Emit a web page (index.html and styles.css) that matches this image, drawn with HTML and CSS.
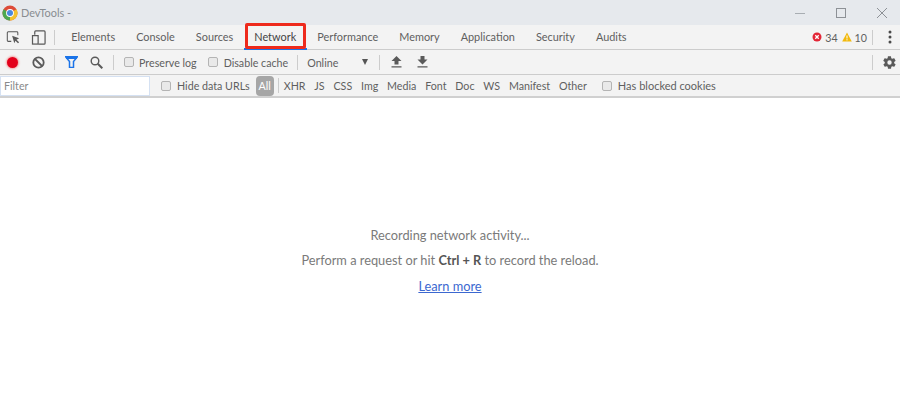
FILE: index.html
```html
<!DOCTYPE html>
<html lang="en">
<head>
<meta charset="utf-8">
<title>DevTools</title>
<link rel="stylesheet" href="styles.css">
</head>
<body>
<header class="titlebar">
  <svg class="chrome" width="16" height="16" viewBox="0 0 16 16">
    <circle cx="8" cy="8" r="7.5" fill="#dd4b39"/>
    <path d="M8 8 8 15.500A7.500 7.500 0 0 1 1.500 4.250Z" fill="#4ca84f"/>
    <path d="M8 8 14.500 4.250A7.500 7.500 0 0 1 8 15.500Z" fill="#f3c22e"/>
    <circle cx="8" cy="8" r="3.900" fill="#fff"/>
    <circle cx="8" cy="8" r="3" fill="#4a89dc"/>
  </svg>
  <span class="title">DevTools -</span>
  <div class="winbtns">
    <svg width="12" height="12" viewBox="0 0 12 12"><path d="M1 6.500H11" stroke="#a8adb2" fill="none"/></svg>
    <svg width="12" height="12" viewBox="0 0 12 12"><rect x="1.500" y="1.500" width="9" height="9" stroke="#8d9196" fill="none"/></svg>
    <svg width="12" height="12" viewBox="0 0 12 12"><path d="M1 1 11 11M11 1 1 11" stroke="#8d9196" fill="none"/></svg>
  </div>
</header>

<nav class="tabbar">
  <svg class="ic-inspect" width="14" height="14" viewBox="0 0 16 16"><path d="M6 13H2.500a1 1 0 0 1-1-1V3a1 1 0 0 1 1-1h10a1 1 0 0 1 1 1v3" fill="none" stroke="#5a5a5a" stroke-width="1.200"/><path d="M7 6.500 15 9.500 12 11 15 14 13.700 15.200 10.800 12.200 9.500 15Z" fill="#5a5a5a"/></svg>
  <svg class="ic-device" width="15" height="15" viewBox="0 0 16 16"><path d="M4 5V2a1 1 0 0 1 1-1h9a1 1 0 0 1 1 1v12a1 1 0 0 1-1 1H8" fill="none" stroke="#5a5a5a" stroke-width="1.300"/><rect x="1.600" y="6" width="6" height="9" fill="none" stroke="#5a5a5a" stroke-width="1.300"/></svg>
  <span class="vsep tabsep"></span>
  <div class="tabs">
    <span class="tab">Elements</span>
    <span class="tab">Console</span>
    <span class="tab">Sources</span>
    <span class="tab active">Network</span>
    <span class="tab">Performance</span>
    <span class="tab">Memory</span>
    <span class="tab">Application</span>
    <span class="tab">Security</span>
    <span class="tab">Audits</span>
  </div>
  <div class="status">
    <svg width="10" height="10" viewBox="0 0 10 10"><circle cx="5" cy="5" r="4.500" fill="#e32636"/><path d="M3.300 3.300 6.700 6.700M6.700 3.300 3.300 6.700" stroke="#fff" stroke-width="1.300"/></svg>
    <span class="count">34</span>
    <svg class="warn" width="10" height="10" viewBox="0 0 10 10"><path d="M5 .5 9.800 9.500H.2Z" fill="#f2b90d"/><path d="M5 3.500V6.500M5 7.200V8.400" stroke="#fff" stroke-width="1"/></svg>
    <span class="count">10</span>
    <span class="vsep statsep"></span>
    <svg class="kebab" width="4" height="14" viewBox="0 0 4 14"><circle cx="2" cy="2" r="1.500" fill="#4a4a4a"/><circle cx="2" cy="7" r="1.500" fill="#4a4a4a"/><circle cx="2" cy="12" r="1.500" fill="#4a4a4a"/></svg>
  </div>
</nav>

<section class="toolbar">
  <span class="record"></span>
  <svg class="ic-clear" width="13" height="13" viewBox="0 0 13 13"><circle cx="6.500" cy="6.500" r="5.200" fill="none" stroke="#5a5a5a" stroke-width="1.800"/><path d="M3 3 10 10" stroke="#5a5a5a" stroke-width="1.800"/></svg>
  <span class="vsep sep-a"></span>
  <svg class="ic-filter" width="13" height="12" viewBox="0 0 13 12"><path d="M.5.800H12.500L8.500 5.500V11.500H4.500V5.500Z" fill="none" stroke="#1a73e8" stroke-width="1.500"/><path d="M1 1H12V3H1Z" fill="#1a73e8"/></svg>
  <svg class="ic-search" width="13" height="13" viewBox="0 0 13 13"><circle cx="5" cy="5" r="3.800" fill="none" stroke="#5a5a5a" stroke-width="1.400"/><path d="M7.800 7.800 12.300 12.300" stroke="#5a5a5a" stroke-width="2"/></svg>
  <span class="vsep sep-b"></span>
  <label class="check preserve"><span class="box"></span>Preserve log</label>
  <label class="check disable"><span class="box"></span>Disable cache</label>
  <span class="vsep sep-c"></span>
  <span class="online">Online</span>
  <span class="caret"></span>
  <span class="vsep sep-d"></span>
  <svg class="ic-up" width="11" height="12" viewBox="0 0 11 12"><path d="M5.500 0 10.500 5H7.500V8.500H3.500V5H.5Z M.5 10.300H10.500V11.500H.5Z" fill="#5a5a5a"/></svg>
  <svg class="ic-down" width="11" height="12" viewBox="0 0 11 12"><path d="M3.500 0H7.500V3.500H10.500L5.500 8.500 .5 3.500H3.500Z M.5 10.300H10.500V11.500H.5Z" fill="#5a5a5a"/></svg>
  <span class="vsep sep-e"></span>
  <svg class="ic-gear" width="15" height="15" viewBox="0 0 24 24"><path fill="#5a5a5a" d="M19.400 13c.1-.3.100-.7.100-1s0-.7-.1-1l2.100-1.600c.2-.2.200-.4.100-.6l-2-3.500c-.1-.2-.4-.3-.6-.2l-2.500 1c-.5-.4-1.100-.7-1.700-1l-.4-2.600c0-.3-.2-.5-.5-.5h-4c-.3 0-.5.200-.5.500l-.4 2.600c-.6.300-1.200.6-1.700 1l-2.500-1c-.2-.1-.5 0-.6.200l-2 3.500c-.1.200-.1.400.1.600L4.500 11c0 .3-.1.700-.1 1s0 .7.100 1l-2.100 1.600c-.2.200-.2.400-.1.600l2 3.500c.1.200.4.300.6.200l2.500-1c.5.400 1.100.7 1.700 1l.4 2.600c0 .3.200.5.500.5h4c.3 0 .5-.2.500-.5l.4-2.600c.6-.3 1.200-.6 1.700-1l2.500 1c.2.100.5 0 .6-.2l2-3.500c.1-.2.100-.4-.1-.6ZM12 15.500a3.500 3.500 0 1 1 0-7 3.500 3.500 0 0 1 0 7Z"/></svg>
</section>

<section class="filterbar">
  <span class="filter-input">Filter</span>
  <label class="check hide"><span class="box"></span>Hide data URLs</label>
  <span class="all">All</span>
  <span class="vsep sep-f"></span>
  <div class="ftypes">
    <span class="ftype">XHR</span>
    <span class="ftype">JS</span>
    <span class="ftype">CSS</span>
    <span class="ftype">Img</span>
    <span class="ftype">Media</span>
    <span class="ftype">Font</span>
    <span class="ftype">Doc</span>
    <span class="ftype">WS</span>
    <span class="ftype">Manifest</span>
    <span class="ftype">Other</span>
  </div>
  <label class="check blocked"><span class="box"></span>Has blocked cookies</label>
</section>

<main class="content">
  <p class="msg first">Recording network activity...</p>
  <p class="msg second">Perform a request or hit <b>Ctrl + R</b> to record the reload.</p>
  <a class="learn" href="#">Learn more</a>
</main>
</body>
</html>
```
FILE: styles.css
```css
* { box-sizing: border-box; }
html, body { margin: 0; padding: 0; height: 100%; overflow: hidden; }
body {
  background: #fff;
  font-family: "Lato", "Open Sans", sans-serif;
  font-size: 10.700px;
  color: #5f5f5f;
  display: flex;
  flex-direction: column;
}
svg { flex: none; display: block; }

.titlebar {
  height: 25px;
  background: #e6e9ed;
  display: flex;
  align-items: center;
  padding-left: 2px;
  flex: none;
}
.title { margin-left: 3px; color: #888c90; font-size: 10.900px; }
.winbtns { margin-left: auto; display: flex; gap: 29px; padding-right: 12px; }

.tabbar {
  height: 25px;
  background: #f3f3f3;
  border-bottom: 1px solid #ccc;
  display: flex;
  align-items: center;
  flex: none;
}
.ic-inspect { margin-left: 6px; }
.ic-device { margin-left: 11px; }
.vsep { width: 1px; height: 15px; background: #ccc; flex: none; }
.tabsep { margin-left: 8px; }
.tabs { display: flex; margin-left: 5.800px; height: 24px; }
.tab { padding: 0 10.500px; line-height: 24px; white-space: nowrap; color: #5f5f5f; font-size: 10.900px; }
.tab.active {
  position: relative;
  color: #444;
}
.tab.active::before {
  content: "";
  position: absolute;
  left: 0; right: 0; bottom: -1px;
  height: 2px;
  background: #1a73e8;
}
.tab.active::after {
  content: "";
  position: absolute;
  left: 1px; right: 1px; top: -2px; bottom: 0;
  border: 3px solid #ee2a1c;
  border-radius: 2px;
}
.status { margin-left: auto; display: flex; align-items: center; }
.count { margin-left: 3px; }
.warn { margin-left: 4px; }
.statsep { margin-left: 5px; }
.kebab { margin: 0 8px 0 15px; }

.toolbar {
  height: 25px;
  background: #f3f3f3;
  border-bottom: 1px solid #ccc;
  display: flex;
  align-items: center;
  flex: none;
}
.record {
  width: 11px; height: 11px; margin-left: 7px;
  border-radius: 50%;
  background: #e3001b;
  box-shadow: 0 0 2px 1px #f3a0a0;
}
.ic-clear { margin-left: 14px; }
.sep-a { margin-left: 9px; }
.ic-filter { margin-left: 10px; }
.ic-search { margin-left: 12px; }
.sep-b { margin-left: 10px; }
.check { display: inline-flex; align-items: center; white-space: nowrap; color: #5f5f5f; }
.box {
  width: 10px; height: 10px;
  border: 1px solid #b4b4b4;
  border-radius: 2px;
  background: #e9e9e9;
  margin-right: 6px;
  flex: none;
}
.preserve { margin-left: 10px; }
.preserve .box { margin-right: 5px; }
.disable { margin-left: 11px; }
.sep-c { margin-left: 9px; }
.online { margin-left: 9px; }
.caret {
  margin-left: 24px;
  width: 0; height: 0;
  border-left: 3.500px solid transparent;
  border-right: 3.500px solid transparent;
  border-top: 6px solid #555;
}
.sep-d { margin-left: 11px; }
.ic-up { margin-left: 11px; }
.ic-down { margin-left: 15px; }
.sep-e { margin-left: auto; }
.ic-gear { margin: 0 3px 0 9px; }

.filterbar {
  height: 23px;
  background: #f3f3f3;
  border-bottom: 2px solid #d0d0d0;
  display: flex;
  align-items: center;
  flex: none;
}
.filter-input {
  width: 150px; height: 20px;
  background: #fff;
  border: 1px solid #d5e1f2;
  line-height: 18px;
  padding-left: 3px;
  color: #8a8a8a;
  flex: none;
}
.hide { margin-left: 11px; }
.all {
  margin-left: 6px;
  width: 18px; height: 20px;
  border-radius: 4px;
  background: #a6a6a6;
  color: #fff;
  text-align: center;
  line-height: 20px;
}
.sep-f { margin-left: 4px; }
.ftypes { display: flex; gap: 8.800px; margin-left: 5px; }
.ftype { white-space: nowrap; }
.blocked { margin-left: 15px; font-size: 11px; }

.content {
  flex: 1;
  display: flex;
  flex-direction: column;
  align-items: center;
  padding-top: 128px;
  font-size: 12.800px;
  color: #7a7a7a;
}
.msg { margin: 0; line-height: 18px; }
.second { margin-top: 7px; }
.second b { color: #555; font-weight: 700; }
.learn { margin-top: 8px; line-height: 18px; color: #3c68d0; }
```
